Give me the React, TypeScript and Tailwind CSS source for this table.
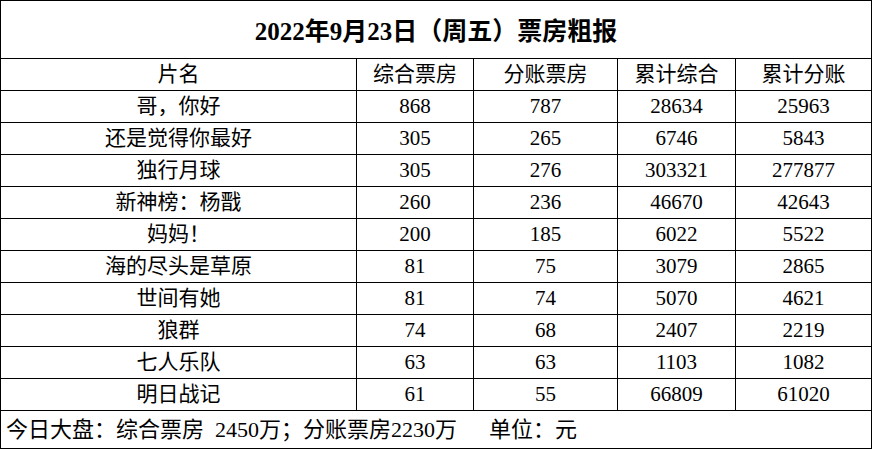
const rows: [string, string, string, string, string][] = [
  ["哥，你好", "868", "787", "28634", "25963"],
  ["还是觉得你最好", "305", "265", "6746", "5843"],
  ["独行月球", "305", "276", "303321", "277877"],
  ["新神榜：杨戬", "260", "236", "46670", "42643"],
  ["妈妈！", "200", "185", "6022", "5522"],
  ["海的尽头是草原", "81", "75", "3079", "2865"],
  ["世间有她", "81", "74", "5070", "4621"],
  ["狼群", "74", "68", "2407", "2219"],
  ["七人乐队", "63", "63", "1103", "1082"],
  ["明日战记", "61", "55", "66809", "61020"],
];

const headers = ["片名", "综合票房", "分账票房", "累计综合", "累计分账"];

const cell = "border border-black text-center p-0 leading-none";

export default function App() {
  return (
    <div
      className="bg-white w-[872px] h-[451px] text-black"
      style={{ fontFamily: '"Liberation Serif", "Noto Sans CJK SC", serif' }}
    >
      <table className="border-collapse table-fixed w-[871px] text-[21px]">
        <colgroup>
          <col className="w-[356px]" />
          <col className="w-[117px]" />
          <col className="w-[144px]" />
          <col className="w-[118px]" />
          <col className="w-[136px]" />
        </colgroup>
        <tbody>
          <tr className="h-[58px]">
            <td colSpan={5} className={`${cell} font-bold text-[25px] pt-[4px]`}>
              2022年9月23日（周五）票房粗报
            </td>
          </tr>
          <tr className="h-[32px]">
            {headers.map((h) => (
              <td key={h} className={cell}>
                {h}
              </td>
            ))}
          </tr>
          {rows.map((r) => (
            <tr key={r[0]} className="h-[32px]">
              {r.map((v, i) => (
                <td key={i} className={cell}>
                  {v}
                </td>
              ))}
            </tr>
          ))}
          <tr className="h-[38px]">
            <td
              colSpan={5}
              className="border border-black p-0 pl-[5px] text-left leading-none text-[22px] whitespace-pre"
            >
              今日大盘：综合票房  2450万；分账票房2230万
              <span className="ml-[32px]">单位：元</span>
            </td>
          </tr>
        </tbody>
      </table>
    </div>
  );
}
